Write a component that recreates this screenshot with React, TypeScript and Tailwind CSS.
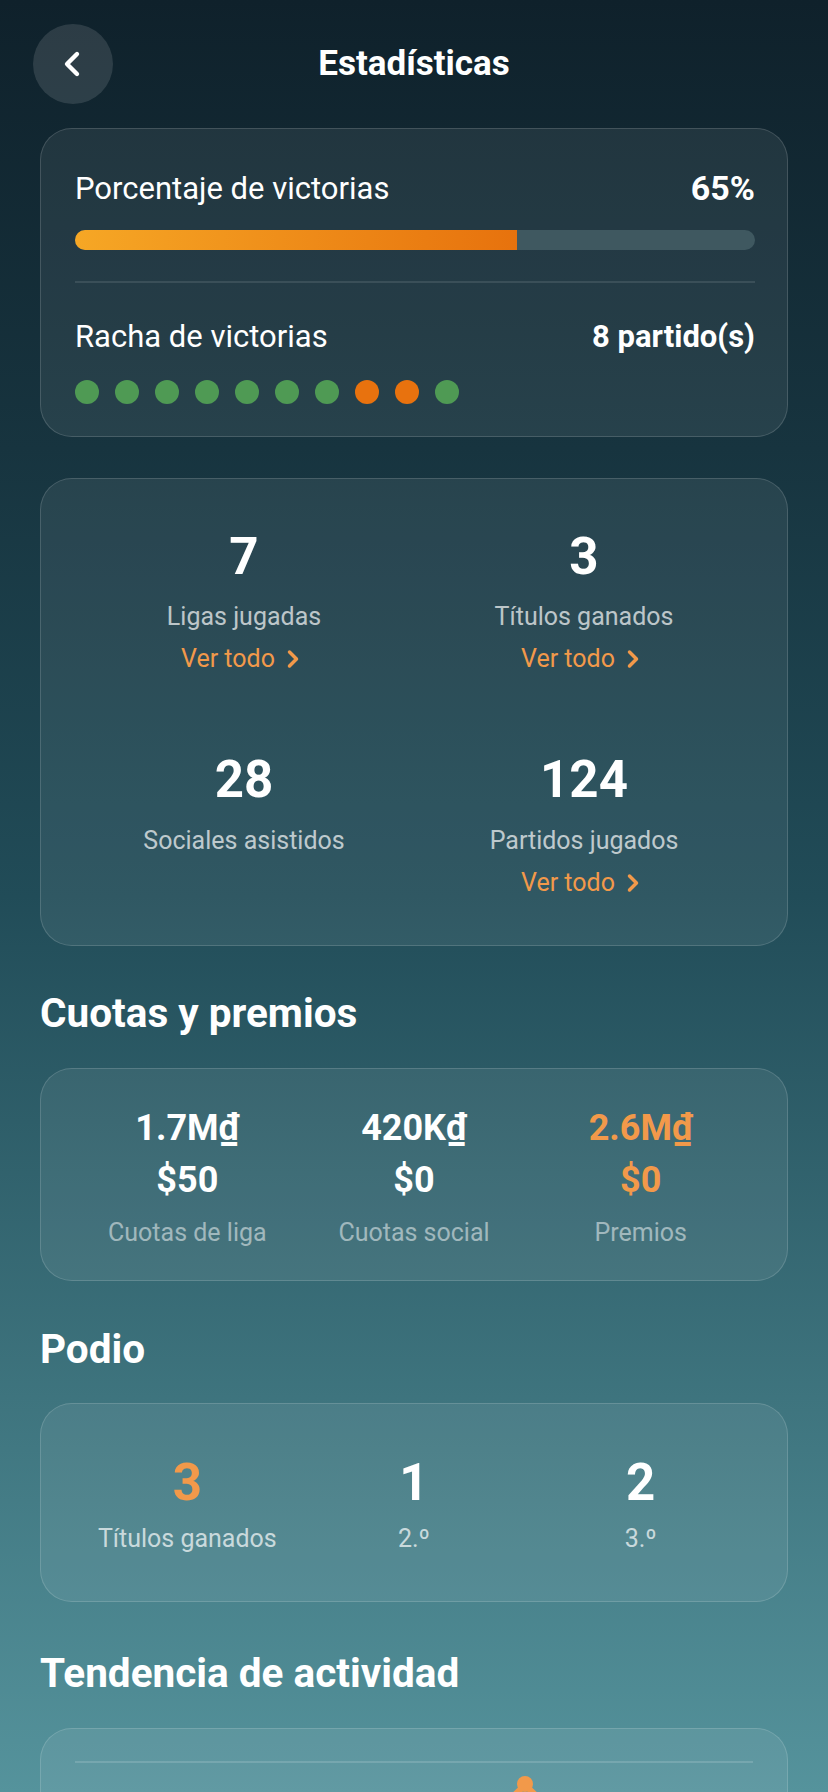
import React from 'react';
import { ChevronLeft, ChevronRight } from 'lucide-react';

const streak = ['w', 'w', 'w', 'w', 'w', 'w', 'w', 'l', 'l', 'w'];

const stats = [
    { value: '7', label: 'Ligas jugadas', link: true },
    { value: '3', label: 'Títulos ganados', link: true },
    { value: '28', label: 'Sociales asistidos', link: false },
    { value: '124', label: 'Partidos jugados', link: true },
];

const fees = [
    { main: '1.7M₫', usd: '$50', label: 'Cuotas de liga', accent: false },
    { main: '420K₫', usd: '$0', label: 'Cuotas social', accent: false },
    { main: '2.6M₫', usd: '$0', label: 'Premios', accent: true },
];

const podium = [
    { value: '3', label: 'Títulos ganados', accent: true },
    { value: '1', label: '2.º', accent: false },
    { value: '2', label: '3.º', accent: false },
];

const card = 'rounded-[32px] border border-white/15 bg-white/[0.07]';

const SectionTitle = ({ children, className = '' }: { children: React.ReactNode; className?: string }) => (
    <h2 className={`text-[40.5px] leading-[1.2] font-bold ${className}`}>{children}</h2>
);

const StatsPage: React.FC = () => {
    return (
        <div className="h-[1792px] overflow-hidden bg-[linear-gradient(180deg,#0f212b_0%,#17343f_25%,#214c58_50%,#3e747e_78%,#55939c_100%)] font-['Roboto',sans-serif] text-white">
            {/* header */}
            <div className="grid grid-cols-[80px_1fr_80px] items-center px-[33px] pt-[24px]">
                <button className="flex h-[80px] w-[80px] items-center justify-center rounded-full bg-white/[0.12]">
                    <ChevronLeft size={40} strokeWidth={2.6} className="-ml-[2px]" />
                </button>
                <h1 className="text-center text-[35px] leading-[1.2] font-bold">Estadísticas</h1>
                <div />
            </div>

            <div className="mt-[24px] flex flex-col px-10">
                {/* win rate + streak */}
                <div className={`${card} pl-[34px] pr-[32px] pt-[41px] pb-[32px]`}>
                    <div className="flex h-[37px] items-center justify-between text-[31px] leading-[1.2]">
                        <span>Porcentaje de victorias</span>
                        <span className="text-[34px] font-bold">65%</span>
                    </div>
                    <div className="mt-[23px] h-[20px] overflow-hidden rounded-full bg-[#3f5860]">
                        <div className="h-full w-[65%] bg-[linear-gradient(90deg,#f6a725,#e7720d)]" />
                    </div>
                    <div className="mt-[31px] h-[2px] bg-white/10" />
                    <div className="mt-[35px] flex items-center justify-between text-[31px] leading-[1.2]">
                        <span>Racha de victorias</span>
                        <span className="font-bold">8 partido(s)</span>
                    </div>
                    <div className="mt-[25px] flex gap-4">
                        {streak.map((s, i) => (
                            <div
                                key={i}
                                className={s === 'w' ? 'h-6 w-6 rounded-full bg-[#4f9a54]' : 'h-6 w-6 rounded-full bg-[#e8720e]'}
                            />
                        ))}
                    </div>
                </div>

                {/* counters */}
                <div className={`${card} mt-[41px] grid grid-cols-2 gap-y-[75px] px-[33px] pt-[47px] pb-[47px]`}>
                    {stats.map(s => (
                        <div key={s.label} className="flex flex-col items-center">
                            <span className="text-[51px] leading-[1.2] font-bold">{s.value}</span>
                            <span className="mt-[15px] text-[25px] leading-[1.2] text-white/70">{s.label}</span>
                            {s.link && (
                                <span className="mt-[12px] flex items-center text-[25px] leading-[1.2] text-[#f2994a]">
                                    Ver todo
                                    <ChevronRight size={28} strokeWidth={3} className="ml-[4px]" />
                                </span>
                            )}
                        </div>
                    ))}
                </div>

                <SectionTitle className="mt-[43px]">Cuotas y premios</SectionTitle>
                <div className={`${card} mt-[31px] grid grid-cols-3 px-[33px] pt-[38px] pb-[32px]`}>
                    {fees.map(f => (
                        <div key={f.label} className="flex flex-col items-center">
                            <span className={`text-[36px] leading-[1.2] font-bold ${f.accent ? 'text-[#f2994a]' : ''}`}>{f.main}</span>
                            <span className={`mt-[9px] text-[36px] leading-[1.2] font-bold ${f.accent ? 'text-[#f2994a]' : ''}`}>{f.usd}</span>
                            <span className="mt-[15px] text-[25px] leading-[1.2] text-white/50">{f.label}</span>
                        </div>
                    ))}
                </div>

                <SectionTitle className="mt-[44px]">Podio</SectionTitle>
                <div className={`${card} mt-[30px] grid grid-cols-3 px-[33px] pt-[48px] pb-[47px]`}>
                    {podium.map(p => (
                        <div key={p.label} className="flex flex-col items-center">
                            <span className={`text-[51px] leading-[1.2] font-bold ${p.accent ? 'text-[#f2994a]' : ''}`}>{p.value}</span>
                            <span className="mt-[11px] text-[25px] leading-[1.2] text-white/70">{p.label}</span>
                        </div>
                    ))}
                </div>

                <SectionTitle className="mt-[47px]">Tendencia de actividad</SectionTitle>
                <div className={`${card} mt-[30px] h-[300px] px-[34px] pt-[32px]`}>
                    <div className="h-[2px] bg-white/15" />
                    <svg width="678" height="60" viewBox="0 0 678 60" className="block">
                        <path d="M410 60 L450 22 L490 60" fill="none" stroke="#f2994a" strokeWidth="6" strokeLinecap="round" strokeLinejoin="round" />
                        <circle cx="450" cy="21" r="8" fill="#f2994a" />
                    </svg>
                </div>
            </div>
        </div>
    );
};

export default StatsPage;
